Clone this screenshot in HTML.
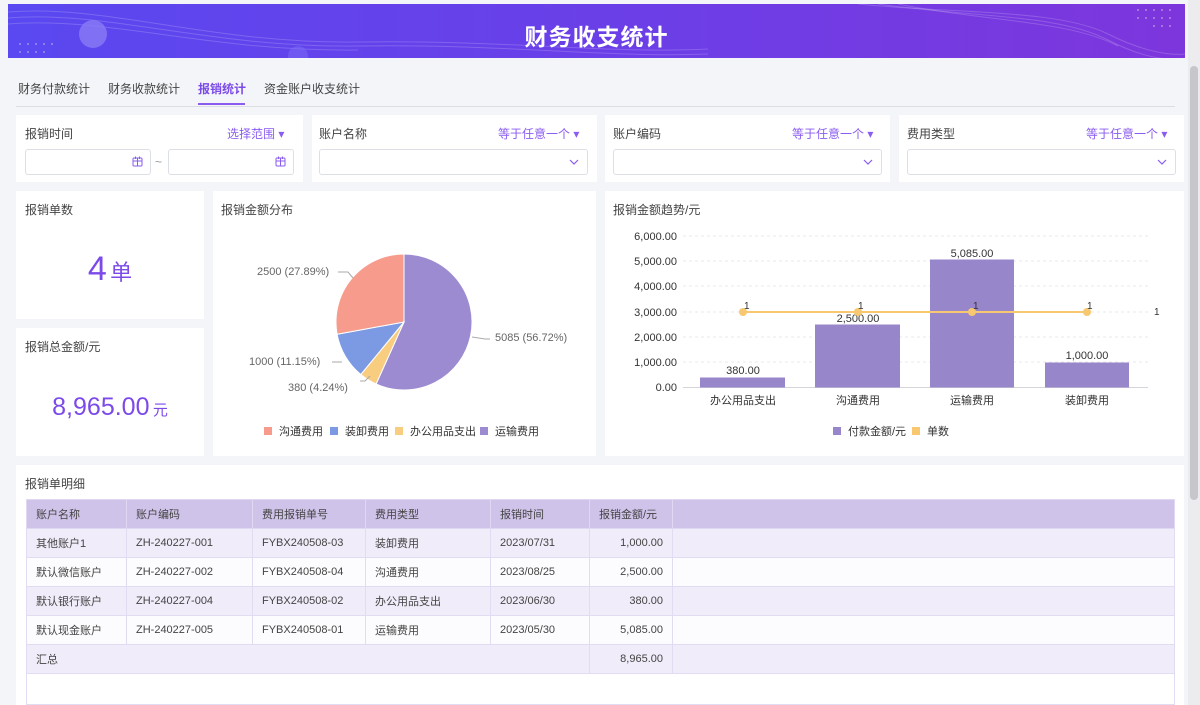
<!DOCTYPE html>
<html><head><meta charset="utf-8"><style>
*{box-sizing:border-box;margin:0;padding:0}
body{width:1200px;height:705px;overflow:hidden;background:#f4f5f9;font-family:"Liberation Sans","Noto Sans CJK SC",sans-serif;color:#333;font-size:12px;position:relative}
.abs{position:absolute}
.card{position:absolute;background:#fff}
.banner{left:8px;top:4px;width:1177px;height:54px;background:linear-gradient(90deg,#5a48f0 0%,#6a3fe8 50%,#7d36dc 100%);overflow:hidden}
.banner h1{position:absolute;left:0;right:0;top:14px;text-align:center;color:#fff;font-size:23px;font-weight:bold;letter-spacing:1px}
.tab{position:absolute;top:80px;font-size:12px;color:#444}
.lbl{position:absolute;font-size:12px;color:#444}
.sel{position:absolute;font-size:12px;color:#8a5cf0}
.inp{position:absolute;border:1px solid #dcdfe6;border-radius:3px;height:26px;background:#fff}
table{border-collapse:collapse;position:absolute;left:26px;top:499px;width:1149px;font-size:11px;color:#444}
td{border:1px solid #e2dcf2;height:29px;padding:0 9px}
thead td{background:#d0c3ea;border-color:#e0d8f2}
tr.o td{background:#f0ecf9}
tr.e td{background:#fcfcfe}
.r{text-align:right}
</style></head><body>
<div class="abs banner">
<svg width="1177" height="54" style="position:absolute;left:0;top:0">
<g fill="none" stroke="rgba(255,255,255,0.18)" stroke-width="1">
<path d="M0 8 C100 0 200 40 350 38 S600 50 700 45"/><path d="M0 14 C100 6 200 44 350 42 S600 54 700 50"/><path d="M0 20 C100 12 200 48 350 46"/>
<path d="M850 0 C950 10 1050 5 1100 30 S1177 50 1177 50"/><path d="M870 0 C970 14 1050 10 1100 36 S1177 54 1177 54"/><path d="M890 0 C980 18 1060 16 1110 42"/>
</g>
<circle cx="85" cy="30" r="14" fill="#8a7cf5" opacity="0.8"/>
<circle cx="290" cy="52" r="10" fill="#7a6cf5" opacity="0.5"/>
<g fill="rgba(255,255,255,0.4)"><circle cx="12" cy="40" r="1"/><circle cx="20" cy="40" r="1"/><circle cx="28" cy="40" r="1"/><circle cx="36" cy="40" r="1"/><circle cx="44" cy="40" r="1"/><circle cx="12" cy="48" r="1"/><circle cx="20" cy="48" r="1"/><circle cx="28" cy="48" r="1"/><circle cx="36" cy="48" r="1"/>
<circle cx="1130" cy="6" r="1"/><circle cx="1138" cy="6" r="1"/><circle cx="1146" cy="6" r="1"/><circle cx="1154" cy="6" r="1"/><circle cx="1162" cy="6" r="1"/><circle cx="1130" cy="14" r="1"/><circle cx="1138" cy="14" r="1"/><circle cx="1146" cy="14" r="1"/><circle cx="1154" cy="14" r="1"/><circle cx="1162" cy="14" r="1"/><circle cx="1146" cy="22" r="1"/><circle cx="1154" cy="22" r="1"/><circle cx="1162" cy="22" r="1"/></g>
</svg>
<h1>财务收支统计</h1></div>
<div class="abs" style="right:0;top:0;width:12px;height:705px;background:#ececef"></div>
<div class="abs" style="right:2px;top:66px;width:8px;height:434px;background:#c6c6cb;border-radius:4px"></div>
<div class="abs" style="left:8px;top:66px;width:1177px;height:639px;background:#f4f5f9"></div>
<div class="tab" style="left:18px">财务付款统计</div>
<div class="tab" style="left:108px">财务收款统计</div>
<div class="tab" style="left:198px;color:#7b4ae8;font-weight:bold">报销统计</div>
<div class="abs" style="left:198px;top:103px;width:47px;height:2px;background:#8a5cf0"></div>
<div class="tab" style="left:264px">资金账户收支统计</div>
<div class="abs" style="left:16px;top:106px;width:1159px;height:1px;background:#dcdde3"></div>

<div class="card" style="left:16px;top:115px;width:287px;height:67px"></div>
<div class="card" style="left:312px;top:115px;width:285px;height:67px"></div>
<div class="card" style="left:605px;top:115px;width:285px;height:67px"></div>
<div class="card" style="left:899px;top:115px;width:285px;height:67px"></div>
<div class="lbl" style="left:25px;top:125px">报销时间</div><div class="sel" style="left:227px;top:125px">选择范围 ▾</div>
<div class="lbl" style="left:319px;top:125px">账户名称</div><div class="sel" style="left:498px;top:125px">等于任意一个 ▾</div>
<div class="lbl" style="left:613px;top:125px">账户编码</div><div class="sel" style="left:792px;top:125px">等于任意一个 ▾</div>
<div class="lbl" style="left:907px;top:125px">费用类型</div><div class="sel" style="left:1086px;top:125px">等于任意一个 ▾</div>
<div class="inp" style="left:25px;top:149px;width:126px"><svg class="abs" style="right:7px;top:6px" width="11" height="11"><rect x="1" y="2" width="9" height="8" rx="1" fill="none" stroke="#8a5cf0"/><path d="M1 5H10M5.5 2V10M3.5 0.5V3M7.5 0.5V3" stroke="#8a5cf0"/></svg></div>
<div class="abs" style="left:155px;top:155px;color:#999">~</div>
<div class="inp" style="left:168px;top:149px;width:126px"><svg class="abs" style="right:7px;top:6px" width="11" height="11"><rect x="1" y="2" width="9" height="8" rx="1" fill="none" stroke="#8a5cf0"/><path d="M1 5H10M5.5 2V10M3.5 0.5V3M7.5 0.5V3" stroke="#8a5cf0"/></svg></div>
<div class="inp" style="left:319px;top:149px;width:269px"><svg class="abs" style="right:8px;top:9px" width="10" height="7"><path d="M1 1 L5 5 L9 1" fill="none" stroke="#8a5cf0" stroke-width="1.2"/></svg></div>
<div class="inp" style="left:613px;top:149px;width:269px"><svg class="abs" style="right:8px;top:9px" width="10" height="7"><path d="M1 1 L5 5 L9 1" fill="none" stroke="#8a5cf0" stroke-width="1.2"/></svg></div>
<div class="inp" style="left:907px;top:149px;width:269px"><svg class="abs" style="right:8px;top:9px" width="10" height="7"><path d="M1 1 L5 5 L9 1" fill="none" stroke="#8a5cf0" stroke-width="1.2"/></svg></div>

<div class="card" style="left:16px;top:191px;width:188px;height:128px"></div>
<div class="lbl" style="left:25px;top:201px">报销单数</div>
<div class="abs" style="left:0;width:220px;top:250px;text-align:center;color:#7b4ae8"><span style="font-size:34px">4</span> <span style="font-size:22px">单</span></div>
<div class="card" style="left:16px;top:328px;width:188px;height:128px"></div>
<div class="lbl" style="left:25px;top:338px">报销总金额/元</div>
<div class="abs" style="left:0;width:220px;top:393px;text-align:center;color:#7b4ae8"><span style="font-size:25px">8,965.00</span> <span style="font-size:15px">元</span></div>

<div class="card" style="left:213px;top:191px;width:383px;height:265px"></div>
<div class="lbl" style="left:221px;top:201px">报销金额分布</div>
<svg class="abs" style="left:213px;top:191px" width="383" height="265" font-family="Liberation Sans, Noto Sans CJK SC, sans-serif">
<g transform="translate(-213,-191)" stroke="#fff" stroke-width="1">
<path d="M404 322 L404 254 A68 68 0 1 1 376.1 384 Z" fill="#9d8bd1"/>
<path d="M404 322 L376.1 384 A68 68 0 0 1 360.8 374.5 Z" fill="#f8cd80"/>
<path d="M404 322 L360.8 374.5 A68 68 0 0 1 337.1 334.3 Z" fill="#7b9ae3"/>
<path d="M404 322 L337.1 334.3 A68 68 0 0 1 404 254 Z" fill="#f79b8c"/>
</g>
<g transform="translate(-213,-191)" fill="none" stroke="#aaa"><path d="M338 272 L348 272 L353 278"/><path d="M472 337 L485 339 L490 339"/><path d="M332 362 L342 362"/><path d="M360 381 L365 381 L370 376"/></g>
<g transform="translate(-213,-191)" fill="#666" font-size="11"><text x="257" y="275">2500 (27.89%)</text><text x="495" y="341">5085 (56.72%)</text><text x="249" y="365">1000 (11.15%)</text><text x="288" y="391">380 (4.24%)</text></g>
<g transform="translate(-213,-191)" font-size="11" fill="#333">
<rect x="264" y="427" width="8" height="8" fill="#f79b8c"/><text x="279" y="435">沟通费用</text>
<rect x="330" y="427" width="8" height="8" fill="#7b9ae3"/><text x="345" y="435">装卸费用</text>
<rect x="395" y="427" width="8" height="8" fill="#f8cd80"/><text x="410" y="435">办公用品支出</text>
<rect x="480" y="427" width="8" height="8" fill="#9d8bd1"/><text x="495" y="435">运输费用</text></g>
</svg>

<div class="card" style="left:605px;top:191px;width:579px;height:265px"></div>
<div class="lbl" style="left:613px;top:201px">报销金额趋势/元</div>
<svg class="abs" style="left:0;top:0" width="1200" height="705" font-family="Liberation Sans, Noto Sans CJK SC, sans-serif" pointer-events="none">
<g stroke="#e8e8ee" stroke-dasharray="3,3"><path d="M683 236H1148M683 261H1148M683 286H1148M683 312H1148M683 337H1148M683 362H1148"/></g>
<path d="M683 387.5H1148" stroke="#d4d4da"/>
<g font-size="11" fill="#333" text-anchor="end"><text x="677" y="240">6,000.00</text><text x="677" y="265">5,000.00</text><text x="677" y="290">4,000.00</text><text x="677" y="316">3,000.00</text><text x="677" y="341">2,000.00</text><text x="677" y="366">1,000.00</text><text x="677" y="391">0.00</text></g>
<g fill="#9886cb"><rect x="700" y="377.5" width="85" height="10"/><rect x="815" y="324.5" width="85" height="63"/><rect x="930" y="259.5" width="84" height="128"/><rect x="1045" y="362.5" width="84" height="25"/></g>
<g font-size="11" fill="#333" text-anchor="middle"><text x="743" y="374">380.00</text><text x="858" y="322">2,500.00</text><text x="972" y="257">5,085.00</text><text x="1087" y="359">1,000.00</text>
<text x="743" y="404">办公用品支出</text><text x="858" y="404">沟通费用</text><text x="972" y="404">运输费用</text><text x="1087" y="404">装卸费用</text></g>
<path d="M743 312H1087" stroke="#f8c870" stroke-width="2"/>
<g fill="#f8c870"><circle cx="743" cy="312" r="4"/><circle cx="858" cy="312" r="4"/><circle cx="972" cy="312" r="4"/><circle cx="1087" cy="312" r="4"/></g>
<g font-size="10" fill="#333"><text x="744" y="309">1</text><text x="858" y="309">1</text><text x="973" y="309">1</text><text x="1087" y="309">1</text><text x="1154" y="315">1</text></g>
<rect x="833" y="427" width="8" height="8" fill="#9886cb"/><text x="848" y="435" font-size="11" fill="#333">付款金额/元</text>
<rect x="912" y="427" width="8" height="8" fill="#f8c870"/><text x="927" y="435" font-size="11" fill="#333">单数</text>
</svg>

<div class="card" style="left:16px;top:465px;width:1168px;height:240px"></div>
<div class="lbl" style="left:25px;top:475px">报销单明细</div>
<table>
<colgroup><col style="width:100px"><col style="width:126px"><col style="width:113px"><col style="width:125px"><col style="width:99px"><col style="width:83px"><col></colgroup>
<thead><tr><td>账户名称</td><td>账户编码</td><td>费用报销单号</td><td>费用类型</td><td>报销时间</td><td>报销金额/元</td><td></td></tr></thead>
<tr class="o"><td>其他账户1</td><td>ZH-240227-001</td><td>FYBX240508-03</td><td>装卸费用</td><td>2023/07/31</td><td class="r">1,000.00</td><td></td></tr>
<tr class="e"><td>默认微信账户</td><td>ZH-240227-002</td><td>FYBX240508-04</td><td>沟通费用</td><td>2023/08/25</td><td class="r">2,500.00</td><td></td></tr>
<tr class="o"><td>默认银行账户</td><td>ZH-240227-004</td><td>FYBX240508-02</td><td>办公用品支出</td><td>2023/06/30</td><td class="r">380.00</td><td></td></tr>
<tr class="e"><td>默认现金账户</td><td>ZH-240227-005</td><td>FYBX240508-01</td><td>运输费用</td><td>2023/05/30</td><td class="r">5,085.00</td><td></td></tr>
<tr class="o"><td colspan="5">汇总</td><td class="r">8,965.00</td><td></td></tr>
</table>
<div class="abs" style="left:26px;top:673px;width:1149px;height:32px;border:1px solid #e2dcf2;border-top:none"></div>
</body></html>
